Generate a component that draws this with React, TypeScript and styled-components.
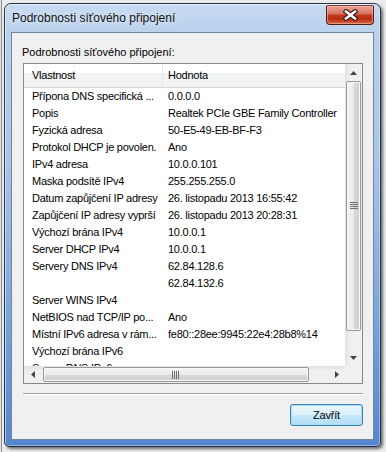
import React from "react";
import styled, { createGlobalStyle } from "styled-components";

const rows: [string, string][] = [
  ["Přípona DNS specifická ...", "0.0.0.0"],
  ["Popis", "Realtek PCIe GBE Family Controller"],
  ["Fyzická adresa", "50-E5-49-EB-BF-F3"],
  ["Protokol DHCP je povolen.", "Ano"],
  ["IPv4 adresa", "10.0.0.101"],
  ["Maska podsítě IPv4", "255.255.255.0"],
  ["Datum zapůjčení IP adresy", "26. listopadu 2013 16:55:42"],
  ["Zapůjčení IP adresy vyprší", "26. listopadu 2013 20:28:31"],
  ["Výchozí brána IPv4", "10.0.0.1"],
  ["Server DHCP IPv4", "10.0.0.1"],
  ["Servery DNS IPv4", "62.84.128.6"],
  ["", "62.84.132.6"],
  ["Server WINS IPv4", ""],
  ["NetBIOS nad TCP/IP po...", "Ano"],
  ["Místní IPv6 adresa v rám...", "fe80::28ee:9945:22e4:28b8%14"],
  ["Výchozí brána IPv6", ""],
  ["Server DNS IPv6", ""],
];

const GlobalStyle = createGlobalStyle`
  html, body {
    margin: 0;
    padding: 0;
  }
  body {
    width: 386px;
    height: 452px;
    overflow: hidden;
    font-family: "Liberation Sans", Arial, sans-serif;
  }
`;

const Desktop = styled.div`
  width: 386px;
  height: 452px;
  box-sizing: border-box;
  padding: 3px 0 0 4px;
  background: linear-gradient(to right, #e4e4e4 0, #e4e4e4 1px, #8c8c8c 1px, #8c8c8c 2px, #ececec 2px);
`;

const Window = styled.div`
  width: 377px;
  height: 444px;
  box-sizing: border-box;
  display: flex;
  flex-direction: column;
  padding: 0 6px 6px 6px;
  border: 1px solid #24364f;
  border-radius: 7px 7px 5px 5px;
  background: linear-gradient(180deg, #c7dbf2 0%, #b7cfeb 8%, #a9c5e7 35%, #82aadc 65%, #5486cd 100%);
  box-shadow: inset 1px 1px 0 rgba(255, 255, 255, 0.55), inset -1px -1px 0 rgba(255, 255, 255, 0.35),
    2px 2px 3px rgba(0, 0, 0, 0.55);
`;

const TitleBar = styled.div`
  height: 28px;
  display: flex;
  justify-content: space-between;
  align-items: flex-start;
  padding-left: 1px;
`;

const Title = styled.div`
  font-size: 12px;
  line-height: 28px;
  color: #111;
  text-shadow: 0 0 6px rgba(255, 255, 255, 0.9);
`;

const CloseButton = styled.div`
  width: 48px;
  height: 20px;
  margin-top: 1px;
  box-sizing: border-box;
  display: flex;
  align-items: center;
  justify-content: center;
  border: 1px solid #5a1a12;
  border-top-color: #7a3a30;
  border-radius: 2px 2px 4px 4px;
  background: linear-gradient(180deg, #e9a597 0%, #d77563 42%, #c53a20 50%, #b52d14 72%, #dc6a45 100%);
  box-shadow: inset 0 0 0 1px rgba(255, 200, 190, 0.5);
`;

const Client = styled.div`
  flex: 1;
  display: flex;
  flex-direction: column;
  padding: 13px 10px 0 11px;
  border: 1px solid #6f87a6;
  background: #f0f0f0;
`;

const Caption = styled.div`
  margin-left: -1px;
  font-size: 11px;
  line-height: 13px;
  color: #000;
`;

const ListView = styled.div`
  margin-top: 4px;
  width: 340px;
  height: 321px;
  box-sizing: border-box;
  border: 1px solid #828790;
  background: #fff;
  display: grid;
  grid-template-columns: 1fr 17px;
  grid-template-rows: 1fr 17px;
  overflow: hidden;
`;

const Table = styled.div`
  overflow: hidden;
  font-size: 11px;
  letter-spacing: -0.25px;
  color: #000;
`;

const Header = styled.div`
  height: 24px;
  box-sizing: border-box;
  display: grid;
  grid-template-columns: 139px 1fr;
  border-bottom: 1px solid #d5d5d5;
  background: linear-gradient(180deg, #ffffff 0%, #ffffff 40%, #f2f3f5 40%, #f2f3f5 100%);
`;

const HeaderCell = styled.div<{ $first?: boolean }>`
  line-height: 23px;
  padding-left: ${(p) => (p.$first ? "8px" : "5px")};
  border-right: ${(p) => (p.$first ? "1px solid #e3e8ee" : "none")};
`;

const Row = styled.div`
  height: 17px;
  display: grid;
  grid-template-columns: 139px 1fr;
  line-height: 17px;
`;

const Cell = styled.div<{ $first?: boolean }>`
  padding-left: ${(p) => (p.$first ? "8px" : "5px")};
  white-space: nowrap;
  overflow: hidden;
`;

const VScroll = styled.div`
  display: flex;
  flex-direction: column;
  background: linear-gradient(to right, #e2e2e2 0%, #efefef 30%, #f0f0f0 100%);
`;

const HScroll = styled.div`
  display: flex;
  background: linear-gradient(180deg, #e2e2e2 0%, #efefef 30%, #f0f0f0 100%);
`;

const Corner = styled.div`
  background: #f0f0f0;
`;

const Arrow = styled.div`
  width: 17px;
  height: 17px;
  flex: none;
  display: flex;
  align-items: center;
  justify-content: center;
`;

const VTrack = styled.div`
  flex: 1;
  padding: 0 1px;
`;

const HTrack = styled.div`
  flex: 1;
  padding: 1px 1px;
  display: flex;
`;

const Thumb = styled.div<{ $vertical?: boolean }>`
  box-sizing: border-box;
  ${(p) => (p.$vertical ? "height: 250px; margin-top: 0;" : "width: 266px; margin-left: 1px;")}
  display: flex;
  align-items: center;
  justify-content: center;
  border: 1px solid #979797;
  border-radius: 2px;
  background: ${(p) =>
    p.$vertical
      ? "linear-gradient(to right, #f2f2f2 0%, #ebebeb 50%, #d9d9d9 51%, #cfcfcf 100%)"
      : "linear-gradient(180deg, #f2f2f2 0%, #ebebeb 50%, #d9d9d9 51%, #cfcfcf 100%)"};
  box-shadow: inset 0 0 0 1px #f8f8f8;
`;

const Separator = styled.div`
  margin-top: 9px;
  width: 340px;
  border-top: 1px solid #a0a0a0;
  border-bottom: 1px solid #ffffff;
`;

const Footer = styled.div`
  width: 340px;
  display: flex;
  justify-content: flex-end;
  margin-top: 9px;
`;

const Button = styled.div`
  width: 73px;
  height: 22px;
  box-sizing: border-box;
  display: flex;
  align-items: center;
  justify-content: center;
  font-size: 11px;
  letter-spacing: -0.2px;
  color: #000;
  border: 1px solid #3c7fb1;
  border-radius: 3px;
  background: linear-gradient(180deg, #eaf6fd 0%, #dcf1fc 48%, #c6e8fb 50%, #b3def6 100%);
  box-shadow: inset 0 0 0 1px #a6e0fb;
`;

const Triangle = ({ dir }: { dir: "up" | "down" | "left" | "right" }) => {
  const pts = {
    up: "0,4 7,4 3.5,0",
    down: "0,0 7,0 3.5,4",
    left: "4,0 4,7 0,3.5",
    right: "0,0 0,7 4,3.5",
  }[dir];
  const vertical = dir === "up" || dir === "down";
  return (
    <svg width={vertical ? 7 : 4} height={vertical ? 4 : 7} viewBox={vertical ? "0 0 7 4" : "0 0 4 7"}>
      <polygon points={pts} fill="#444" />
    </svg>
  );
};

const Grip = ({ vertical }: { vertical?: boolean }) =>
  vertical ? (
    <svg width="8" height="8" viewBox="0 0 8 8">
      {[0, 2, 4, 6].map((y) => (
        <rect key={y} x="0" y={y} width="8" height="1" fill="#707070" />
      ))}
    </svg>
  ) : (
    <svg width="8" height="8" viewBox="0 0 8 8">
      {[0, 2, 4, 6].map((x) => (
        <rect key={x} x={x} y="0" width="1" height="8" fill="#707070" />
      ))}
    </svg>
  );

const CloseIcon = () => (
  <svg width="15" height="12" viewBox="0 0 15 12">
    <path d="M3 2.5 L12 9.5 M12 2.5 L3 9.5" stroke="#3a120c" strokeWidth="4.8" strokeLinecap="square" />
    <path d="M3 2.5 L12 9.5 M12 2.5 L3 9.5" stroke="#ffffff" strokeWidth="2.6" strokeLinecap="square" />
  </svg>
);

export default function App() {
  return (
    <>
      <GlobalStyle />
      <Desktop>
        <Window>
          <TitleBar>
            <Title>Podrobnosti síťového připojení</Title>
            <CloseButton>
              <CloseIcon />
            </CloseButton>
          </TitleBar>
          <Client>
            <Caption>Podrobnosti síťového připojení:</Caption>
            <ListView>
              <Table>
                <Header>
                  <HeaderCell $first>Vlastnost</HeaderCell>
                  <HeaderCell>Hodnota</HeaderCell>
                </Header>
                {rows.map(([name, value], i) => (
                  <Row key={i}>
                    <Cell $first>{name}</Cell>
                    <Cell>{value}</Cell>
                  </Row>
                ))}
              </Table>
              <VScroll>
                <Arrow>
                  <Triangle dir="up" />
                </Arrow>
                <VTrack>
                  <Thumb $vertical>
                    <Grip vertical />
                  </Thumb>
                </VTrack>
                <Arrow>
                  <Triangle dir="down" />
                </Arrow>
              </VScroll>
              <HScroll>
                <Arrow>
                  <Triangle dir="left" />
                </Arrow>
                <HTrack>
                  <Thumb>
                    <Grip />
                  </Thumb>
                </HTrack>
                <Arrow>
                  <Triangle dir="right" />
                </Arrow>
              </HScroll>
              <Corner />
            </ListView>
            <Separator />
            <Footer>
              <Button>Zavřít</Button>
            </Footer>
          </Client>
        </Window>
      </Desktop>
    </>
  );
}
